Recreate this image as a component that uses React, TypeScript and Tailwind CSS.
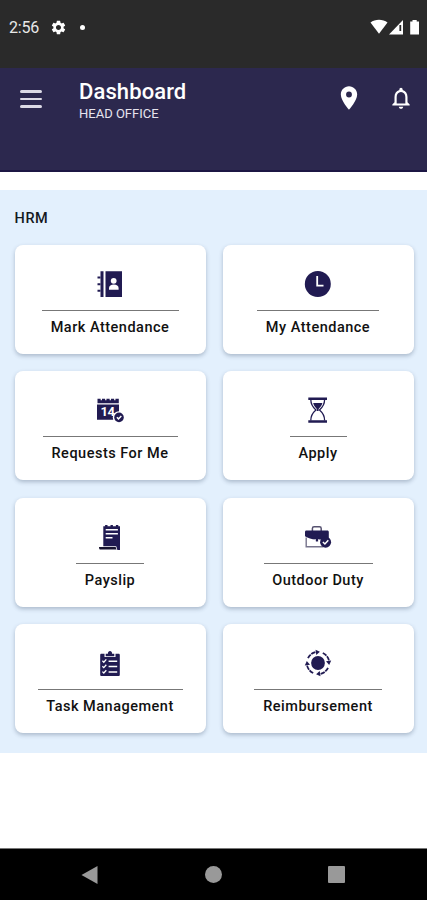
import type { ReactNode } from "react";
import { MdLocationOn, MdNotificationsNone, MdSettings } from "react-icons/md";

const NAVY = "#211b52";

const AddressBookIcon = () => (
  <svg viewBox="0 0 32 32" className="h-8 w-8" fill={NAVY}>
    <path d="M6.5 3.3h3v25.7h-3zM11.5 3.3H28V29H11.5z" />
    <path d="M3.5 8.5h3v2h-3zM3.5 15.2h3v2h-3zM3.5 21.8h3v2h-3z" />
    <circle cx="19.7" cy="12.8" r="2.9" fill="#fff" />
    <path d="M15 21.7v-1.8c0-2 2-3.4 4.8-3.4s4.8 1.4 4.8 3.4v1.8z" fill="#fff" />
  </svg>
);

const ClockIcon = () => (
  <svg viewBox="0 0 32 32" className="h-8 w-8">
    <circle cx="15.8" cy="16" r="13" fill={NAVY} />
    <path d="M15.2 8v9.6h6.3" fill="none" stroke="#fff" strokeWidth="1.8" />
  </svg>
);

const CalendarIcon = () => (
  <svg viewBox="0 0 32 32" className="h-8 w-8" fill={NAVY}>
    <path d="M3.5 4.8h21.3v4.4H3.5zM3 10.6h22v15.2H3z" />
    <path d="M7.3 3.2v3.1M11.8 3.2v3.1M16.3 3.2v3.1M20.8 3.2v3.1" stroke="#fff" strokeWidth="1.3" />
    <text x="13.4" y="22.4" textAnchor="middle" fontFamily="Roboto, sans-serif" fontSize="13" fontWeight="700" letterSpacing="-0.6" fill="#fff">
      14
    </text>
    <circle cx="25" cy="23.4" r="6.2" fill="#fff" />
    <circle cx="25" cy="23.4" r="4.8" />
    <path d="M22.9 23.3l1.6 1.6 2.8-2.9" fill="none" stroke="#fff" strokeWidth="1.5" />
  </svg>
);

const HourglassIcon = () => (
  <svg viewBox="0 0 32 32" className="h-8 w-8" fill={NAVY}>
    <path d="M6.3 3.5H25v2.4H6.3zM6.3 26.3H25v2.4H6.3z" />
    <path
      d="M8.8 5.6c0 5 1.6 7.4 5.1 10.4-3.5 3-5.1 5.4-5.1 10.4M22.6 5.6c0 5-1.6 7.4-5.1 10.4 3.5 3 5.1 5.4 5.1 10.4"
      fill="none"
      stroke={NAVY}
      strokeWidth="1.3"
    />
    <path d="M11.2 9h9.2c-.6 2.4-2 4-3.8 5.9v2.2h-1.8v-2.2C13 13 11.8 11.4 11.2 9z" />
  </svg>
);

const PayslipIcon = () => (
  <svg viewBox="0 0 32 32" className="h-8 w-8" fill={NAVY}>
    <path d="M9.3 5.2h1.8V4h2.4v1.2h3V4h2.4v1.2h3V4h2.4v1.2H26V29h-2.6l-1.2-3.7H9.3z" />
    <path d="M5 26h16.6l1 2.6H6.4c-.9 0-1.4-1-1.4-2.6z" fill="#17132f" />
    <path d="M11.7 8.7h12.2M11.7 12.8h12.2M11.7 16.8h6.8" stroke="#fff" strokeWidth="1.4" />
  </svg>
);

const BriefcaseIcon = () => (
  <svg viewBox="0 0 32 32" className="h-8 w-8" fill={NAVY}>
    <path d="M10.4 10V7.4c0-1.1.7-1.7 1.7-1.7h5.4c1 0 1.7.6 1.7 1.7V10" fill="none" stroke="#55516f" strokeWidth="1.5" />
    <path d="M4.2 16.5v9.3h17" fill="none" stroke="#77748c" strokeWidth="1.4" />
    <path d="M4.3 9.6h21c1 0 1.5.6 1.5 1.5v7.3H17v2h-3.3v-2C9.8 18.2 6 17.2 3 15.2v-4.1c0-.9.5-1.5 1.3-1.5z" />
    <path d="M12.8 18.2h4.3v1.5c0 1.1-.8 1.9-2.1 1.9s-2.2-.8-2.2-1.9z" fill="#fff" />
    <path d="M13.8 18h2.3v1.7c0 .6-.4.9-1.1.9s-1.2-.3-1.2-.9z" />
    <circle cx="23.6" cy="21.2" r="5.5" />
    <path d="M20.9 21l2 2 3.4-3.8" fill="none" stroke="#fff" strokeWidth="1.5" />
  </svg>
);

const ClipboardIcon = () => (
  <svg viewBox="0 0 32 32" className="h-8 w-8" fill={NAVY}>
    <path d="M7.5 6.8h3V10h11V6.8h3c.8 0 1.3.5 1.3 1.3v19.7c0 .8-.5 1.3-1.3 1.3h-17c-.8 0-1.3-.5-1.3-1.3V8.1c0-.8.5-1.3 1.3-1.3z" />
    <path d="M11.7 9.2V6.7h2.2c0-1.7.9-2.7 2.1-2.7s2.1 1 2.1 2.7h2.2v2.5z" />
    <path d="M14.6 14.2h8.6M14.6 19.6h8.6M14.6 25h8.6" stroke="#fff" strokeWidth="1.5" />
    <path
      d="M8.4 13.8l1.4 1.4 2.5-2.8M8.4 19.2l1.4 1.4 2.5-2.8M8.4 24.6l1.4 1.4 2.5-2.8"
      fill="none"
      stroke="#fff"
      strokeWidth="1.3"
    />
  </svg>
);

const ReimbursementIcon = () => (
  <svg viewBox="0 0 32 32" className="h-8 w-8" fill={NAVY}>
    <circle cx="16" cy="16" r="6.9" />
    <g id="arc">
      <path d="M6 11.2a11.2 11.2 0 0 1 8.2-6.3" fill="none" stroke={NAVY} strokeWidth="1.8" strokeDasharray="4.5 0.8" />
      <path d="M13.5 2.8l4.4 2-3.6 3.2z" />
    </g>
    <use href="#arc" transform="rotate(90 16 16)" />
    <use href="#arc" transform="rotate(180 16 16)" />
    <use href="#arc" transform="rotate(270 16 16)" />
  </svg>
);

interface MenuItem {
  label: string;
  icon: ReactNode;
  line: string;
}

const items: MenuItem[] = [
  { label: "Mark Attendance", icon: <AddressBookIcon />, line: "w-[137px]" },
  { label: "My Attendance", icon: <ClockIcon />, line: "w-[122px]" },
  { label: "Requests For Me", icon: <CalendarIcon />, line: "w-[135px]" },
  { label: "Apply", icon: <HourglassIcon />, line: "w-[57px]" },
  { label: "Payslip", icon: <PayslipIcon />, line: "w-[68px]" },
  { label: "Outdoor Duty", icon: <BriefcaseIcon />, line: "w-[109px]" },
  { label: "Task Management", icon: <ClipboardIcon />, line: "w-[145px]" },
  { label: "Reimbursement", icon: <ReimbursementIcon />, line: "w-[128px]" },
];

function StatusBar() {
  return (
    <div className="flex h-[68px] items-start justify-between bg-[#2a2a2a] pt-[17px] pr-[7px] pl-[9px] text-white">
      <div className="flex h-5 items-center">
        <span className="w-[41px] pt-[2px] text-base tracking-[-0.2px] text-[#e8e8e8]">2:56</span>
        <MdSettings className="h-[17px] w-[17px]" />
        <span className="ml-[13px] h-[5px] w-[5px] rounded-full bg-white" />
      </div>
      <svg viewBox="0 0 50 20" className="h-5 w-[50px]" fill="#fff">
        <path d="M0.5 5.5C5 1.9 13 1.9 17.5 5.5L9 16.8z" />
        <path d="M33 3v14.5H19z" />
        <path d="M30.3 8v6" stroke="#2a2a2a" strokeWidth="1.8" />
        <path d="M40.2 4.5h2.3V2.9h4.2v1.6H49v13h-8.8z" />
      </svg>
    </div>
  );
}

function Header() {
  return (
    <header className="flex h-[104px] items-start border-b-2 border-[#1c1644] bg-[#2c284e] pr-[13px] pl-5 text-white">
      <button type="button" title="Menu" className="mt-[22px] flex w-[22px] flex-col gap-[5px]">
        <span className="h-[2.5px] w-full rounded-full bg-[#dcdae6]" />
        <span className="h-[2.5px] w-full rounded-full bg-[#dcdae6]" />
        <span className="h-[2.5px] w-full rounded-full bg-[#dcdae6]" />
      </button>
      <div className="mt-[12px] ml-[37px] flex-1">
        <h1 className="text-[22px] leading-6 font-medium tracking-[0.1px]">Dashboard</h1>
        <p className="mt-[2px] text-[13px] leading-4 text-[#e6e4ee]">HEAD OFFICE</p>
      </div>
      <div className="mt-4 flex items-center gap-[25px]">
        <MdLocationOn className="h-7 w-7" />
        <MdNotificationsNone className="h-[26px] w-[26px]" />
      </div>
    </header>
  );
}

function MenuCard({ label, icon, line }: MenuItem) {
  return (
    <button
      type="button"
      className="flex h-[109px] flex-col items-center rounded-lg bg-white pt-[23px] shadow-[0_2px_4px_rgba(40,60,90,0.3)]"
    >
      {icon}
      <span className={`mt-[10px] h-px bg-[#777] ${line}`} />
      <span className="mt-[7px] text-[14.5px] leading-5 font-medium tracking-[0.5px] text-[#111]">{label}</span>
    </button>
  );
}

export default function App() {
  return (
    <div className="flex h-[900px] w-[427px] flex-col overflow-hidden bg-white font-['Roboto',sans-serif]">
      <StatusBar />
      <Header />
      <main className="flex-1 pt-[18px]">
        <section className="h-[563px] bg-[#e3f0fd] pt-[19px] pr-[13.5px] pl-[14.5px]">
          <h2 className="text-[14.5px] leading-5 font-medium tracking-[0.6px] text-[#15191f]">HRM</h2>
          <div className="mt-4 grid grid-cols-2 gap-x-[17px] gap-y-[17.4px]">
            {items.map((item) => (
              <MenuCard key={item.label} {...item} />
            ))}
          </div>
        </section>
      </main>
      <nav className="flex h-[52px] items-center justify-between border-t border-[#777] bg-black pr-[82px] pl-[81px]">
        <svg viewBox="0 0 17 18" className="h-[18px] w-[17px]" fill="#999">
          <path d="M16.5 0v18L.5 9z" />
        </svg>
        <span className="h-[17px] w-[17px] rounded-full bg-[#999]" />
        <span className="h-[17px] w-[17px] rounded-[1px] bg-[#999]" />
      </nav>
    </div>
  );
}
